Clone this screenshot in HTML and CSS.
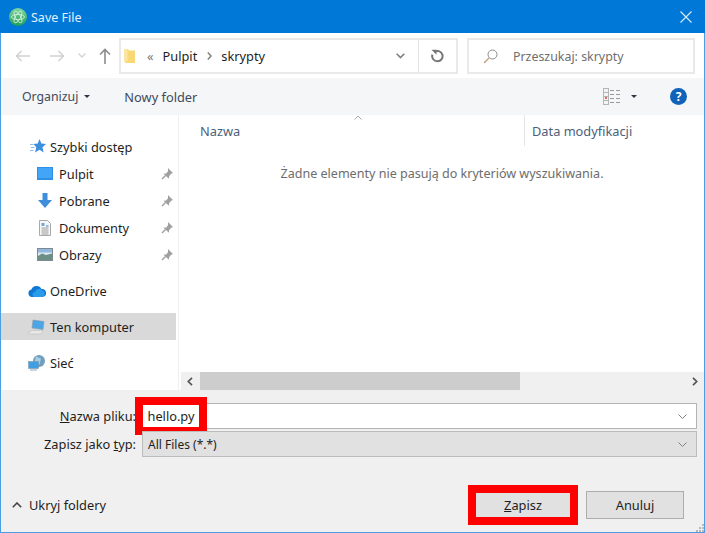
FILE: index.html
```html
<!DOCTYPE html>
<html lang="pl">
<head>
    <meta charset="UTF-8">
    <meta name="viewport" content="width=device-width, initial-scale=1.0">
    <title>Save File</title>
    <link rel="stylesheet" href="styles.css">
</head>
<body>
<div class="window">

    <header class="titlebar">
        <svg class="app-icon" width="18" height="18" viewBox="0 0 18 18">
            <defs>
                <linearGradient id="appGreen" x1="0" y1="0" x2="0" y2="1">
                    <stop offset="0" stop-color="#7fd6a0"/>
                    <stop offset="1" stop-color="#1f9e55"/>
                </linearGradient>
            </defs>
            <circle cx="9" cy="9" r="9" fill="url(#appGreen)"/>
            <g fill="none" stroke="#d8f3e2" stroke-width="0.8">
                <ellipse cx="9" cy="9" rx="6.5" ry="2.6"/>
                <ellipse cx="9" cy="9" rx="6.5" ry="2.6" transform="rotate(60 9 9)"/>
                <ellipse cx="9" cy="9" rx="6.5" ry="2.6" transform="rotate(120 9 9)"/>
            </g>
        </svg>
        <span class="title-text">Save File</span>
        <svg class="close-icon" width="12" height="12" viewBox="0 0 12 12">
            <path d="M0.5 0.5l11 11M11.5 0.5l-11 11" stroke="#dcecf9" stroke-width="1.1"/>
        </svg>
    </header>

    <div class="addressbar">
        <svg class="nav-btn back" width="16" height="12" viewBox="0 0 16 12">
            <path d="M15 6H1.5M6.5 1l-5 5 5 5" fill="none" stroke="#d2d2d2" stroke-width="1.6"/>
        </svg>
        <svg class="nav-btn forward" width="16" height="12" viewBox="0 0 16 12">
            <path d="M1 6h13.500M9.500 1l5 5-5 5" fill="none" stroke="#d2d2d2" stroke-width="1.6"/>
        </svg>
        <svg class="nav-btn recent" width="8" height="5" viewBox="0 0 8 5">
            <path d="M0.500 0.500L4 4l3.500-3.500" fill="none" stroke="#d2d2d2" stroke-width="1.300"/>
        </svg>
        <svg class="nav-btn up" width="12" height="16" viewBox="0 0 12 16">
            <path d="M6 16V1.500M1 6.500l5-5 5 5" fill="none" stroke="#8c8c8c" stroke-width="1.600"/>
        </svg>

        <div class="pathbox">
            <svg class="path-folder" width="11" height="15" viewBox="0 0 11 15">
                <path d="M0 1h4l1 1.500h6V15H1.500L0 13z" fill="#f8d775"/>
                <path d="M0 1h3.500v12.500H0z" fill="#fbe6a2"/>
            </svg>
            <span class="path-more">«</span>
            <span class="crumb">Pulpit</span>
            <svg class="crumb-sep" width="5" height="8" viewBox="0 0 5 8">
                <path d="M0.800 0.500L4 4 0.800 7.500" fill="none" stroke="#808080" stroke-width="1.500"/>
            </svg>
            <span class="crumb">skrypty</span>
            <svg class="path-chevron" width="9" height="6" viewBox="0 0 9 6">
                <path d="M0.700 0.800L4.500 4.600 8.300 0.800" fill="none" stroke="#808080" stroke-width="1.600"/>
            </svg>
            <div class="refresh">
                <svg width="13" height="14" viewBox="0 0 13 14">
                    <path d="M3.200 3a5.200 5.200 0 1 1-1.800 2.600" fill="none" stroke="#777" stroke-width="2"/>
                    <path d="M0.500 0.800h5v5z" fill="#777"/>
                </svg>
            </div>
        </div>

        <div class="searchbox">
            <svg width="15" height="15" viewBox="0 0 15 15">
                <circle cx="9.500" cy="5.500" r="4.500" fill="none" stroke="#8a8a8a"/>
                <path d="M6 9l-5 5" stroke="#c09a7a" stroke-width="1.200"/>
            </svg>
            <span>Przeszukaj: skrypty</span>
        </div>
    </div>

    <div class="toolbar">
        <span class="tool organize">Organizuj</span>
        <span class="caret"></span>
        <span class="tool new-folder">Nowy folder</span>
        <svg class="view-icon" width="18" height="17" viewBox="0 0 18 17">
            <rect x="0.500" y="0.500" width="5" height="16" fill="#f4f4f4" stroke="#b5b5b5"/>
            <path d="M1 4.500h4M1 8.500h4M1 12.500h4" stroke="#b5b5b5"/>
            <rect x="2" y="9" width="2" height="2" fill="#d66"/>
            <path d="M7 2.500h4M13 2.500h4M7 6.500h4M13 6.500h4M7 10.500h4M13 10.500h4M7 14.500h4M13 14.500h4" stroke="#9a9a9a"/>
        </svg>
        <span class="caret view-caret"></span>
        <span class="help">?</span>
    </div>

    <div class="content">
        <nav class="sidebar">
            <div class="nav-row nav-head">
                <svg width="16" height="15" viewBox="0 0 16 15">
                    <path d="M9.500 0l1.900 4.600 4.600.4-3.500 3.200 1.100 5.300-4.100-2.700-4.400 2.700 1.200-5.300L3.500 5l4.300-.4z" fill="#3d8fdc"/>
                    <path d="M0 5.500h3.500M1 8.500h3.500M0 11.500h3.500" stroke="#8dbdea"/>
                </svg>
                <span>Szybki dostęp</span>
            </div>
            <div class="nav-row nav-child">
                <svg width="16" height="13" viewBox="0 0 16 13">
                    <rect width="16" height="13" fill="#2f8fe6"/>
                    <rect x="1" y="1" width="14" height="10" fill="#42a5f5"/>
                </svg>
                <span>Pulpit</span>
                <svg class="pin" width="12" height="12" viewBox="0 0 12 12">
                    <path d="M7 0l5 5-1.800.7-2 2.300-.3 2.700L2.500 5.800l2.700-.3L7 3.300z" fill="#a0a0a0"/>
                    <path d="M4.500 7.500L1 11" stroke="#a0a0a0" stroke-width="1.400"/>
                </svg>
            </div>
            <div class="nav-row nav-child">
                <svg width="16" height="15" viewBox="0 0 16 15">
                    <path d="M5.500 0h5v7H15l-7 8-7-8h4.500z" fill="#3f8edb"/>
                </svg>
                <span>Pobrane</span>
                <svg class="pin" width="12" height="12" viewBox="0 0 12 12">
                    <path d="M7 0l5 5-1.800.7-2 2.300-.3 2.700L2.500 5.800l2.700-.3L7 3.300z" fill="#a0a0a0"/>
                    <path d="M4.500 7.500L1 11" stroke="#a0a0a0" stroke-width="1.400"/>
                </svg>
            </div>
            <div class="nav-row nav-child">
                <svg width="16" height="16" viewBox="0 0 16 16">
                    <path d="M2.500 0.500h8l3 3v12h-11z" fill="#f6f6f6" stroke="#a9a9a9"/>
                    <path d="M4.500 3h3v3h-3z" fill="#6fa8dc"/>
                    <path d="M4.500 8h7M4.500 10h7M4.500 12h7M4.500 14h7" stroke="#9a9a9a"/>
                    <path d="M9 6h2.500" stroke="#3d7fc4"/>
                </svg>
                <span>Dokumenty</span>
                <svg class="pin" width="12" height="12" viewBox="0 0 12 12">
                    <path d="M7 0l5 5-1.800.7-2 2.300-.3 2.700L2.500 5.800l2.700-.3L7 3.300z" fill="#a0a0a0"/>
                    <path d="M4.500 7.500L1 11" stroke="#a0a0a0" stroke-width="1.400"/>
                </svg>
            </div>
            <div class="nav-row nav-child">
                <svg width="16" height="13" viewBox="0 0 16 13">
                    <rect x="0.500" y="0.500" width="15" height="12" fill="#dbe9f4" stroke="#7d8a94"/>
                    <path d="M1 8l4-2.500 4 1.500 6-1.500V12H1z" fill="#6c8f85"/>
                    <rect x="1" y="1" width="14" height="3.500" fill="#8fb8dc"/>
                </svg>
                <span>Obrazy</span>
                <svg class="pin" width="12" height="12" viewBox="0 0 12 12">
                    <path d="M7 0l5 5-1.800.7-2 2.300-.3 2.700L2.500 5.800l2.700-.3L7 3.300z" fill="#a0a0a0"/>
                    <path d="M4.500 7.500L1 11" stroke="#a0a0a0" stroke-width="1.400"/>
                </svg>
            </div>

            <div class="nav-row nav-head nav-group">
                <svg class="wide" width="18" height="12" viewBox="0 0 18 12">
                    <path d="M4 12a3.800 3.800 0 0 1-.6-7.500A5.500 5.500 0 0 1 13.500 4 4 4 0 0 1 14.500 12z" fill="#0f78d4"/>
                    <path d="M7 12a2.500 2.500 0 0 1 0-5 4 4 0 0 1 7-1.700 3.500 3.500 0 0 1 .5 6.700z" fill="#2a9be8"/>
                </svg>
                <span>OneDrive</span>
            </div>
            <div class="nav-row nav-head nav-group selected">
                <svg class="wide" width="18" height="16" viewBox="0 0 18 16">
                    <path d="M5 1l11 1.500-1 8L4 9z" fill="#4aa6e6" stroke="#8a9aa6" stroke-width="0.600"/>
                    <path d="M0 14l4-2.500h11L13 15H1z" fill="#e9e9e9" stroke="#bdbdbd" stroke-width="0.600"/>
                </svg>
                <span>Ten komputer</span>
            </div>
            <div class="nav-row nav-head nav-group">
                <svg class="wide" width="18" height="16" viewBox="0 0 18 16">
                    <circle cx="11" cy="6" r="6" fill="#6e9fbe"/>
                    <path d="M8 1.500l5 2-1.500 6-5-1.500z" fill="#a9cde3"/>
                    <rect x="0.500" y="6.500" width="10" height="7" fill="#3f9fe4" stroke="#7d97ab" stroke-width="0.600"/>
                    <path d="M2 15h7" stroke="#b9c5ce" stroke-width="1.500"/>
                </svg>
                <span>Sieć</span>
            </div>
        </nav>

        <main class="files">
            <div class="columns">
                <div class="col col-name">
                    <span>Nazwa</span>
                    <svg class="sort" width="8" height="5" viewBox="0 0 8 5">
                        <path d="M0.500 4.500L4 1l3.500 3.500" fill="none" stroke="#a5a5a5"/>
                    </svg>
                </div>
                <div class="col col-date">Data modyfikacji</div>
            </div>
            <p class="empty">Żadne elementy nie pasują do kryteriów wyszukiwania.</p>
            <div class="hscroll">
                <svg width="6" height="9" viewBox="0 0 6 9">
                    <path d="M5 0.800L1.300 4.500 5 8.200" fill="none" stroke="#555" stroke-width="1.700"/>
                </svg>
                <div class="track"><div class="thumb"></div></div>
                <svg width="6" height="9" viewBox="0 0 6 9">
                    <path d="M1 0.800L4.700 4.500 1 8.200" fill="none" stroke="#555" stroke-width="1.700"/>
                </svg>
            </div>
        </main>
    </div>

    <footer class="footer">
        <div class="form">
            <label class="form-label"><u>N</u>azwa pliku:</label>
            <div class="input name-input">
                <span class="highlight">hello.py</span>
                <svg width="9" height="5" viewBox="0 0 9 5">
                    <path d="M0.500 0.500l4 4 4-4" fill="none" stroke="#808080"/>
                </svg>
            </div>
            <label class="form-label">Zapisz jako <u>t</u>yp:</label>
            <div class="input type-input">
                <span class="type-value">All Files (*.*)</span>
                <svg width="9" height="5" viewBox="0 0 9 5">
                    <path d="M0.500 0.500l4 4 4-4" fill="none" stroke="#808080"/>
                </svg>
            </div>
        </div>
        <div class="actions">
            <div class="hide-folders">
                <svg width="10" height="6" viewBox="0 0 10 6">
                    <path d="M0.800 5.200L5 1l4.200 4.200" fill="none" stroke="#444" stroke-width="1.600"/>
                </svg>
                <span>Ukryj foldery</span>
            </div>
            <button class="btn btn-save"><u>Z</u>apisz</button>
            <button class="btn btn-cancel">Anuluj</button>
        </div>
        <svg class="grip" width="9" height="9" viewBox="0 0 9 9">
            <path d="M7 1h2v2H7zM4 4h2v2H4zM7 4h2v2H7zM1 7h2v2H1zM4 7h2v2H4zM7 7h2v2H7z" fill="#b8b8b8"/>
        </svg>
    </footer>

</div>
</body>
</html>
```

FILE: styles.css
```css
/* General page */
html, body {
    margin: 0;
    padding: 0;
}

body {
    width: 705px;
    height: 533px;
    overflow: hidden;
    font-family: "Noto Sans", "Open Sans", sans-serif;
    font-size: 12.8px;
    color: #1e1e1e;
}

.window {
    box-sizing: border-box;
    width: 705px;
    height: 533px;
    display: flex;
    flex-direction: column;
    border: 1px solid #4a9fe3;
    border-top: none;
    background-color: #fff;
}

/* Title bar */
.titlebar {
    flex: none;
    height: 33px;
    margin: 0 -1px;
    display: flex;
    align-items: center;
    padding: 0 13px 0 9px;
    background-color: #0078d7;
    color: #e3f0fb;
}

.title-text {
    margin: 2px 0 0 4px;
    font-size: 12.5px;
}

.close-icon {
    margin-left: auto;
}

/* Address row */
.addressbar {
    flex: none;
    height: 45px;
    display: flex;
    align-items: center;
    padding-right: 9px;
}

.nav-btn {
    flex: none;
}

.back {
    margin-left: 14px;
}

.forward {
    margin-left: 18px;
}

.recent {
    margin-left: 13px;
}

.up {
    margin: 0 8px 0 13px;
}

.pathbox, .searchbox {
    box-sizing: border-box;
    height: 36px;
    display: flex;
    align-items: center;
    border: 2px solid #e9e9e9;
}

.pathbox {
    width: 339px;
    padding-left: 3px;
}

.path-folder {
    flex: none;
}

.path-more {
    margin: 0 9px 0 12px;
    color: #777;
}

.crumb-sep {
    margin: 0 9px 0 10px;
}

.path-chevron {
    margin-left: auto;
    margin-right: 13px;
}

.refresh {
    flex: none;
    width: 37px;
    height: 100%;
    display: flex;
    align-items: center;
    justify-content: center;
    border-left: 1px solid #e3e3e3;
}

.searchbox {
    width: 228px;
    margin-left: 9px;
    padding: 1px 0 0 14px;
    font-size: 12.4px;
    color: #6f6f6f;
}

.searchbox span {
    margin-left: 15px;
}

/* Toolbar */
.toolbar {
    flex: none;
    height: 37px;
    display: flex;
    align-items: center;
    padding-left: 21px;
    background-color: #f5f6f7;
    color: #3f4a5c;
}

.organize {
    font-size: 12.3px;
}

.caret {
    width: 0;
    height: 0;
    margin-left: 6px;
    border-left: 3px solid transparent;
    border-right: 3px solid transparent;
    border-top: 3px solid #2b3648;
}

.new-folder {
    margin-left: 34px;
}

.view-icon {
    margin-left: auto;
}

.view-caret {
    margin-left: 10px;
}

.help {
    width: 17px;
    height: 17px;
    margin: 0 17px 0 33px;
    border-radius: 50%;
    background-color: #1063b8;
    color: #fff;
    font-size: 12px;
    font-weight: 700;
    line-height: 17px;
    text-align: center;
}

/* Navigation and file list */
.content {
    flex: 1;
    min-height: 0;
    display: flex;
}

.sidebar {
    box-sizing: border-box;
    flex: none;
    width: 178px;
    padding: 18px 2px 0 0;
    border-right: 1px solid #f0f0f0;
}

.nav-row {
    height: 27px;
    display: flex;
    align-items: center;
}

.nav-head {
    padding-left: 29px;
}

.nav-head svg {
    margin-right: 4px;
}

.nav-head .wide {
    margin-left: -2px;
    margin-right: 4px;
}

.nav-child {
    padding-left: 36px;
}

.nav-child svg:first-child {
    margin-right: 6px;
}

.nav-group {
    margin-top: 9px;
}

.selected {
    background-color: #d9d9d9;
}

.pin {
    margin: 0 3px 0 auto;
}

.files {
    flex: 1;
    min-width: 0;
    display: flex;
    flex-direction: column;
}

.columns {
    flex: none;
    height: 31px;
    display: flex;
    color: #4c607a;
}

.col {
    display: flex;
    align-items: center;
}

.col-name {
    position: relative;
    box-sizing: border-box;
    width: 346px;
    padding-left: 21px;
    border-right: 1px solid #e5e5e5;
}

.sort {
    position: absolute;
    top: 0;
    left: 175px;
}

.col-date {
    padding-left: 7px;
}

.empty {
    flex: 1;
    margin: 0;
    padding: 19px 0 0 1px;
    font-size: 12.55px;
    text-align: center;
    color: #6d6d6d;
}

.hscroll {
    flex: none;
    height: 18px;
    margin-left: 2px;
    display: flex;
    align-items: center;
    padding: 0 6px;
    background-color: #f0f0f0;
}

.track {
    flex: 1;
    height: 100%;
    padding: 0 7px;
}

.thumb {
    width: 320px;
    height: 100%;
    background-color: #cdcdcd;
}

/* Bottom form */
.footer {
    position: relative;
    flex: none;
    height: 142px;
    box-sizing: border-box;
    background-color: #f0f0f0;
    padding-top: 13px;
}

.form {
    display: grid;
    grid-template-columns: 135px 555px;
    column-gap: 6px;
    row-gap: 2px;
    align-items: center;
}

.form-label {
    text-align: right;
    white-space: nowrap;
}

.input {
    position: relative;
    box-sizing: border-box;
    height: 26px;
    display: flex;
    align-items: center;
    padding: 0 9px 0 5px;
    border: 1px solid #b4b4b4;
}

.input svg {
    flex: none;
    margin-left: auto;
}

.name-input {
    background-color: #fff;
}

.type-input {
    background-color: #e1e1e1;
    border-color: #bcbcbc;
}

.type-value {
    font-size: 12px;
}

/* Red marker round the file name */
.highlight {
    position: absolute;
    top: -7px;
    left: -8px;
    box-sizing: border-box;
    width: 72px;
    height: 38px;
    border: 8px solid #f00;
    background-color: #fff;
    line-height: 22px;
    text-align: center;
}

.actions {
    display: flex;
    align-items: center;
    height: 40px;
    margin-top: 28px;
    padding-left: 11px;
}

.hide-folders {
    display: flex;
    align-items: center;
    gap: 7px;
    margin-right: auto;
}

.btn {
    box-sizing: border-box;
    font: inherit;
    color: inherit;
    padding: 0;
    background-color: #e1e1e1;
    border: 1px solid #adadad;
}

.btn-save {
    width: 110px;
    height: 40px;
    border: 8px solid #f00;
}

.btn-cancel {
    width: 98px;
    height: 28px;
    margin: 0 20px 0 8px;
}

.grip {
    position: absolute;
    right: 0;
    bottom: 0;
}
```
